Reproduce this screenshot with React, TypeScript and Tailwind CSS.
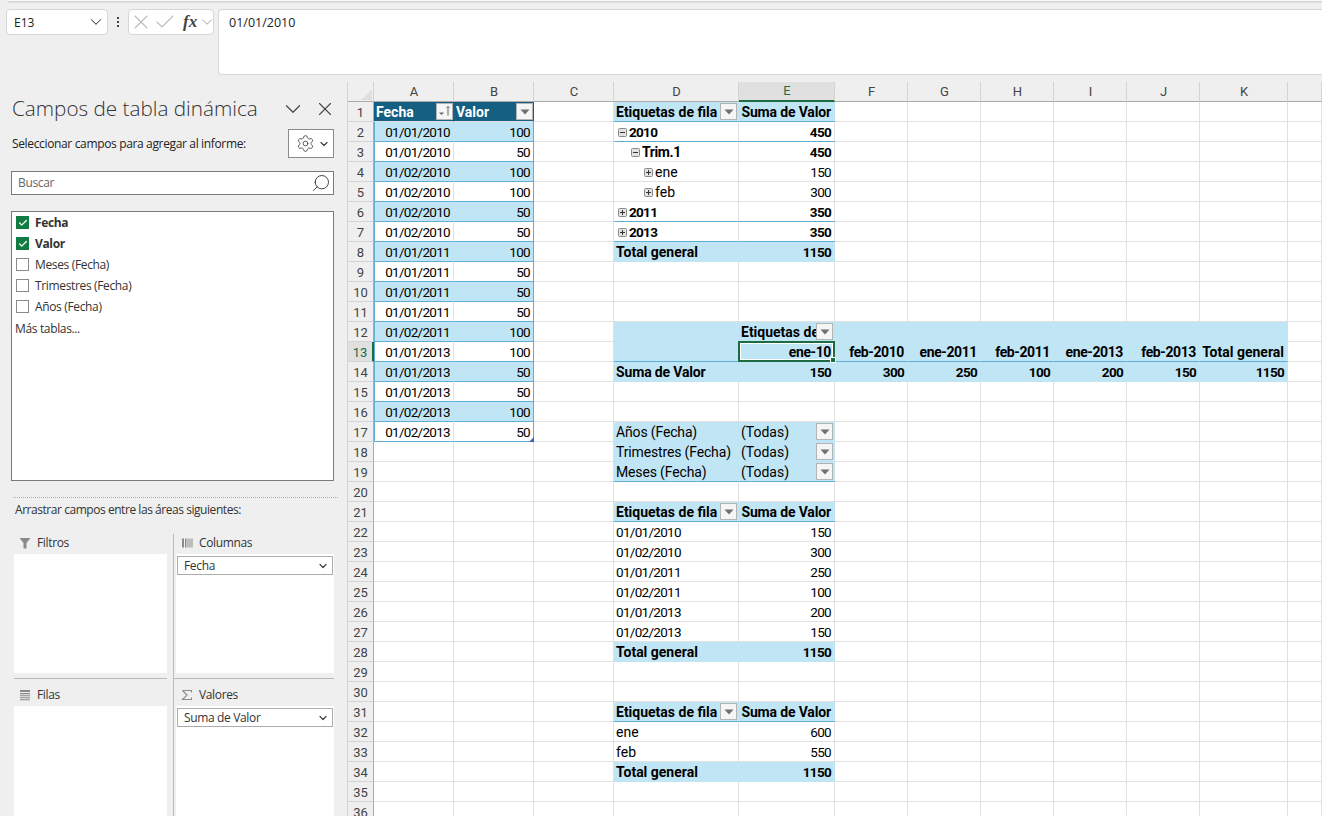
import React from 'react';
import { ChevronDown, X, Check, Search, Settings } from 'lucide-react';

const colHeads = ['A', 'B', 'C', 'D', 'E', 'F', 'G', 'H', 'I', 'J', 'K', ''];

type Cell = {
  t?: string;
  right?: boolean;
  bold?: boolean;
  indent?: string;
  tone?: 'band' | 'head' | 'white';
  line?: boolean;
  frame?: 'left' | 'right';
  expand?: 'plus' | 'minus';
  filter?: boolean;
  tight?: boolean;
  handle?: boolean;
};

// sheet content by "column + row"
const cells: Record<string, Cell> = {};

const tableRows: [string, string][] = [
  ['01/01/2010', '100'], ['01/01/2010', '50'], ['01/02/2010', '100'], ['01/02/2010', '100'],
  ['01/02/2010', '50'], ['01/02/2010', '50'], ['01/01/2011', '100'], ['01/01/2011', '50'],
  ['01/01/2011', '50'], ['01/01/2011', '50'], ['01/02/2011', '100'], ['01/01/2013', '100'],
  ['01/01/2013', '50'], ['01/01/2013', '50'], ['01/02/2013', '100'], ['01/02/2013', '50'],
];

cells['A1'] = { t: 'Fecha', bold: true, tone: 'head', filter: true };
cells['B1'] = { t: 'Valor', bold: true, tone: 'head', filter: true };
tableRows.forEach(([date, val], i) => {
  const band = i % 2 === 0;
  cells['A' + (i + 2)] = { t: date, right: true, tone: band ? 'band' : 'white', line: true, frame: 'left' };
  cells['B' + (i + 2)] = { t: val, right: true, tone: band ? 'band' : 'white', line: true, frame: 'right', handle: i === 15 };
});

function pivotHead(row: number) {
  cells['D' + row] = { t: 'Etiquetas de fila', bold: true, tone: 'band', line: true, filter: true };
  cells['E' + row] = { t: 'Suma de Valor', bold: true, tone: 'band', line: true, right: true, tight: true };
}
function pivotTotal(row: number, total: string) {
  cells['D' + row] = { t: 'Total general', bold: true, tone: 'band' };
  cells['E' + row] = { t: total, bold: true, tone: 'band', right: true };
}

pivotHead(1);
cells['D2'] = { t: '2010', bold: true, expand: 'minus', line: true, indent: 'pl-[4px]' };
cells['E2'] = { t: '450', bold: true, right: true, line: true };
cells['D3'] = { t: 'Trim.1', bold: true, expand: 'minus', indent: 'pl-[17px]' };
cells['E3'] = { t: '450', bold: true, right: true };
cells['D4'] = { t: 'ene', expand: 'plus', indent: 'pl-[30px]' };
cells['E4'] = { t: '150', right: true };
cells['D5'] = { t: 'feb', expand: 'plus', indent: 'pl-[30px]' };
cells['E5'] = { t: '300', right: true };
cells['D6'] = { t: '2011', bold: true, expand: 'plus', line: true, indent: 'pl-[4px]' };
cells['E6'] = { t: '350', bold: true, right: true, line: true };
cells['D7'] = { t: '2013', bold: true, expand: 'plus', line: true, indent: 'pl-[4px]' };
cells['E7'] = { t: '350', bold: true, right: true, line: true };
pivotTotal(8, '1150');

// horizontal pivot, rows 12 to 14
cells['D12'] = { tone: 'band' };
cells['E12'] = { t: 'Etiquetas de', bold: true, tone: 'band', filter: true };
['F', 'G', 'H', 'I', 'J', 'K'].forEach((c) => {
  cells[c + '12'] = { tone: 'band' };
});
cells['D13'] = { tone: 'band', line: true };
cells['E13'] = { t: 'ene-10', bold: true, right: true, tone: 'band', line: true };
([
  ['F', 'feb-2010', '300'], ['G', 'ene-2011', '250'], ['H', 'feb-2011', '100'],
  ['I', 'ene-2013', '200'], ['J', 'feb-2013', '150'], ['K', 'Total general', '1150'],
] as const).forEach(([c, head, val]) => {
  cells[c + '13'] = { t: head, bold: true, right: true, tone: 'band', line: true };
  cells[c + '14'] = { t: val, bold: true, right: true, tone: 'band' };
});
cells['D14'] = { t: 'Suma de Valor', bold: true, tone: 'band', tight: true };
cells['E14'] = { t: '150', bold: true, right: true, tone: 'band' };

// page filters
(['Años (Fecha)', 'Trimestres (Fecha)', 'Meses (Fecha)'] as const).forEach((name, i) => {
  const last = i === 2;
  cells['D' + (17 + i)] = { t: name, tone: 'band', line: last, tight: true };
  cells['E' + (17 + i)] = { t: '(Todas)', tone: 'band', line: last, filter: true };
});

pivotHead(21);
([
  ['01/01/2010', '150'], ['01/02/2010', '300'], ['01/01/2011', '250'],
  ['01/02/2011', '100'], ['01/01/2013', '200'], ['01/02/2013', '150'],
] as const).forEach(([d, v], i) => {
  cells['D' + (22 + i)] = { t: d };
  cells['E' + (22 + i)] = { t: v, right: true };
});
pivotTotal(28, '1150');

pivotHead(31);
cells['D32'] = { t: 'ene' };
cells['E32'] = { t: '600', right: true };
cells['D33'] = { t: 'feb' };
cells['E33'] = { t: '550', right: true };
pivotTotal(34, '1150');

// Aptos Narrow has tighter digits than Roboto, so numbers get squeezed
function textClass(c: Cell) {
  const t = c.t ?? '';
  if (/^[\d/]+$/.test(t)) return 'text-[13.5px] tracking-[-0.7px]';
  if (/\d/.test(t)) return 'text-[14px] tracking-[-0.4px]';
  if (c.tight) return 'text-[14px] tracking-[-0.15px]';
  return 'text-[14px]';
}

function FilterButton({ sorted, className }: { sorted?: boolean; className: string }) {
  return (
    <span className={`absolute z-10 flex h-[17px] w-[17px] items-center justify-center border border-[#b4b4b4] bg-[#f5f5f5] ${className}`}>
      {sorted ? (
        <svg width="15" height="15" viewBox="0 0 15 15">
          <path d="M2 8.5h5l-2.5 2.5z" fill="#666" />
          <path d="M11 2.5v9M9.5 4l1.5-1.5L12.5 4" stroke="#666" fill="none" strokeWidth="1" />
        </svg>
      ) : (
        <svg width="10" height="6" viewBox="0 0 10 6">
          <path d="M0.5 0.5h9L5 5.5z" fill="#707070" />
        </svg>
      )}
    </span>
  );
}

function ExpandBox({ minus }: { minus: boolean }) {
  return (
    <svg width="9" height="9" viewBox="0 0 9 9" className="mr-[1px] shrink-0">
      <rect x="0.5" y="0.5" width="8" height="8" rx="1" fill="#e2e2e2" stroke="#8a8a8a" />
      <path d={minus ? 'M2 4.5h5' : 'M2 4.5h5M4.5 2v5'} stroke="#333" strokeWidth="1" />
    </svg>
  );
}

function SheetCell({ col, row }: { col: string; row: number }) {
  const c = cells[col + row] ?? {};
  const tone =
    c.tone === 'head'
      ? 'bg-[#156082] text-white'
      : c.tone === 'band'
        ? 'bg-[#c0e6f5] text-black'
        : 'bg-white text-black';
  const bottom = c.line ? 'border-b-[#61aed5]' : c.tone === 'band' ? 'border-b-[#c0e6f5]' : 'border-b-[#e1e1e1]';
  const right =
    c.frame === 'right'
      ? 'border-r-[#61aed5]'
      : c.tone && c.tone !== 'white'
        ? 'border-r-transparent'
        : 'border-r-[#e1e1e1]';
  const isSelected = col === 'E' && row === 13;
  return (
    <div
      className={`relative flex items-center overflow-visible whitespace-nowrap border-b border-r pl-[2px] pr-[3px] pt-[2px] ${tone} ${bottom} ${right} ${c.right ? 'justify-end' : ''} ${c.bold ? 'font-bold' : ''} ${c.indent ?? ''} ${c.frame === 'left' ? 'border-l border-l-[#61aed5]' : ''}`}
    >
      {c.expand && <ExpandBox minus={c.expand === 'minus'} />}
      {c.t && <span className={`${textClass(c)} ${c.expand ? 'ml-[1px]' : ''}`}>{c.t}</span>}
      {c.filter && <FilterButton sorted={col === 'A'} className={c.tone === 'head' ? 'right-0 top-[1px]' : 'right-[1px] top-[1px]'} />}
      {c.handle && (
        <svg width="5" height="5" viewBox="0 0 5 5" className="absolute -bottom-[1px] -right-[1px] z-10">
          <path d="M5 0v5H0z" fill="#3f5fbf" />
        </svg>
      )}
      {isSelected && (
        <span className="absolute -left-[1px] -top-[1px] bottom-[-1px] right-[-1px] z-20 border-2 border-[#1d6b41] shadow-[inset_0_0_0_1px_white]">
          <span className="absolute -bottom-[3px] -right-[3px] h-[6px] w-[6px] border border-white bg-[#1d6b41]" />
        </span>
      )}
    </div>
  );
}

function Sheet() {
  const rows = Array.from({ length: 36 }, (_, i) => i + 1);
  return (
    <div className="grid flex-1 grid-cols-[26px_80px_80px_80px_125px_96px_73px_73px_73px_73px_73px_88px_1fr] grid-rows-[20px] auto-rows-[20px] content-start border-l border-[#d4d4d4] bg-white font-['Roboto',sans-serif]">
      <div className="relative border-b border-r border-b-[#ababab] border-r-[#d4d4d4] bg-[#efefef]">
        <svg width="11" height="11" viewBox="0 0 11 11" className="absolute bottom-[1px] right-[1px]">
          <path d="M11 0v11H0z" fill="#dfdfdf" />
        </svg>
      </div>
      {colHeads.map((h, i) => (
        <div
          key={i}
          className={`flex items-center justify-center border-r border-r-[#d4d4d4] pl-[1px] text-[13px] ${h === 'E' ? 'border-b-2 border-b-[#1d6b41] bg-[#e0e0e0] text-[#1d6b41]' : 'border-b border-b-[#ababab] bg-[#efefef] text-[#444]'}`}
        >
          {h}
        </div>
      ))}
      {rows.map((r) => (
        <React.Fragment key={r}>
          <div
            className={`flex items-center justify-center border-b border-b-[#d4d4d4] pt-[2px] text-[13px] ${r === 13 ? 'border-r-2 border-r-[#1d6b41] bg-[#e0e0e0] text-[#1d6b41]' : 'border-r border-r-[#ababab] bg-[#efefef] text-[#444]'}`}
          >
            {r}
          </div>
          {colHeads.map((h, i) => (
            <SheetCell key={i} col={h || 'L'} row={r} />
          ))}
        </React.Fragment>
      ))}
    </div>
  );
}

function AreaLabel({ icon, label, className }: { icon: React.ReactNode; label: string; className?: string }) {
  return (
    <div className={`flex h-[20px] items-center ${className ?? ''}`}>
      <span className="flex w-[20px] justify-center pl-[2px]">{icon}</span>
      <span className="pl-[3px] text-[12px] text-[#333]">{label}</span>
    </div>
  );
}

function AreaChip({ label }: { label: string }) {
  return (
    <div className="mx-[1px] mt-[2px] flex h-[19px] items-center justify-between border border-[#ababab] bg-white pl-[6px] pr-[3px] text-[12px] text-[#333]">
      {label}
      <ChevronDown size={12} strokeWidth={2.5} className="text-[#444]" />
    </div>
  );
}

function FieldRow({ label, checked }: { label: string; checked?: boolean }) {
  return (
    <div className="flex h-[21px] items-center pl-[4px]">
      {checked ? (
        <span className="flex h-[13px] w-[13px] items-center justify-center bg-[#107c41]">
          <Check size={10} strokeWidth={3} className="text-white" />
        </span>
      ) : (
        <span className="h-[13px] w-[13px] border border-[#8a8a8a] bg-white" />
      )}
      <span className={`ml-[6px] text-[12px] text-[#333] ${checked ? 'font-bold' : ''}`}>{label}</span>
    </div>
  );
}

function FieldPanel() {
  return (
    <div className="flex w-[347px] shrink-0 flex-col overflow-hidden pl-[11px] font-['Open_Sans',sans-serif] tracking-[-0.35px]">
      <div className="flex h-[47px] items-center justify-between pr-[11px] pt-[6px]">
        <span className="pl-[1px] text-[20.7px] font-light tracking-normal text-[#333]">Campos de tabla dinámica</span>
        <span className="flex items-center gap-[8px] text-[#444]">
          <ChevronDown size={26} strokeWidth={1.1} />
          <X size={22} strokeWidth={1.2} />
        </span>
      </div>
      <div className="flex h-[29px] items-center justify-between pr-[13px]">
        <span className="pl-[1px] text-[12px] text-[#222]">Seleccionar campos para agregar al informe:</span>
        <span className="flex h-[29px] w-[46px] items-center justify-center gap-[3px] border border-[#8a8a8a] bg-white pl-[3px] text-[#444]">
          <Settings size={19} strokeWidth={1.1} />
          <ChevronDown size={12} strokeWidth={2.5} />
        </span>
      </div>
      <div className="mr-[13px] mt-[13px] flex h-[24px] items-center justify-between border border-[#7a7a7a] bg-white pl-[6px] pr-[2px]">
        <span className="text-[12px] text-[#666]">Buscar</span>
        <Search size={20} strokeWidth={1.1} className="-scale-x-100 text-[#333]" />
      </div>
      <div className="mr-[13px] mt-[16px] h-[270px] shrink-0 border border-[#7a7a7a] bg-white">
        <FieldRow label="Fecha" checked />
        <FieldRow label="Valor" checked />
        <FieldRow label="Meses (Fecha)" />
        <FieldRow label="Trimestres (Fecha)" />
        <FieldRow label="Años (Fecha)" />
        <div className="flex h-[23px] items-center pl-[3px] text-[12px] text-[#333]">Más tablas...</div>
      </div>
      <div className="ml-[2px] mr-[9px] mt-[16px] border-t border-dotted border-[#b0b0b0]" />
      <div className="flex h-[24px] items-center pl-[4px] text-[12px] tracking-[-0.45px] text-[#333]">Arrastrar campos entre las áreas siguientes:</div>
      <div className="ml-[3px] mr-[13px] mt-[12px] grid min-h-0 flex-1 grid-cols-[153px_1fr] grid-rows-[145px_1fr]">
        <div className="flex flex-col border-b border-[#b9b9b9]">
          <AreaLabel
            label="Filtros"
            className="pb-[2px]"
            icon={
              <svg width="12" height="12" viewBox="0 0 12 12">
                <path d="M0.5 1h11L7.5 6v5.5h-3V6z" fill="#8a8a8a" />
              </svg>
            }
          />
          <div className="mb-[5px] flex-1 bg-white" />
        </div>
        <div className="ml-[6px] flex flex-col border-b border-l border-[#b9b9b9] pl-[2px]">
          <AreaLabel
            label="Columnas"
            className="pb-[2px]"
            icon={
              <svg width="12" height="12" viewBox="0 0 12 12">
                <path d="M1 1.5h2v9H1zM4 1.5h1.5v9H4zM6.5 1.5h1v9h-1zM8.5 1.5h1v9h-1zM10.5 1.5h1v9h-1z" fill="#8a8a8a" />
              </svg>
            }
          />
          <div className="mb-[5px] flex-1 bg-white">
            <AreaChip label="Fecha" />
          </div>
        </div>
        <div className="flex flex-col pt-[6px]">
          <AreaLabel
            label="Filas"
            className="mb-[1px]"
            icon={
              <svg width="12" height="12" viewBox="0 0 12 12">
                <path d="M1 1h10v2H1zM1 4h10v1.2H1zM1 6.2h10v1H1zM1 8.3h10v1H1zM1 10.2h10v1H1z" fill="#8a8a8a" />
              </svg>
            }
          />
          <div className="flex-1 bg-white" />
        </div>
        <div className="ml-[6px] flex flex-col border-l border-[#b9b9b9] pl-[2px] pt-[6px]">
          <AreaLabel
            label="Valores"
            className="mb-[1px]"
            icon={
              <svg width="12" height="12" viewBox="0 0 12 12">
                <path d="M1.5 1.5h9v2M10.5 10.5h-9L6 6 1.5 1.5M1.5 10.5h9v-2" stroke="#8a8a8a" strokeWidth="1.1" fill="none" />
              </svg>
            }
          />
          <div className="flex-1 bg-white">
            <AreaChip label="Suma de Valor" />
          </div>
        </div>
      </div>
    </div>
  );
}

function FormulaBar() {
  return (
    <div className="flex h-[77px] shrink-0 items-start gap-[2px] pl-[6px] pt-[8px] font-['Open_Sans',sans-serif] text-[12px] text-[#222]">
      <div className="flex h-[26px] w-[102px] items-center justify-between rounded-[4px] border border-[#d6d6d6] bg-white pl-[7px] pr-[2px]">
        <span className="pt-[1px]">E13</span>
        <ChevronDown size={18} strokeWidth={1.4} className="text-[#444]" />
      </div>
      <div className="flex w-[16px] flex-col items-center gap-[2px] pt-[8px]">
        <span className="h-[2px] w-[2px] bg-[#444]" />
        <span className="h-[2px] w-[2px] bg-[#444]" />
        <span className="h-[2px] w-[2px] bg-[#444]" />
      </div>
      <div className="flex h-[26px] w-[86px] items-center rounded-[4px] border border-[#d6d6d6] bg-white text-[#bbb]">
        <X size={24} strokeWidth={1.1} className="shrink-0" />
        <Check size={24} strokeWidth={1.1} className="shrink-0" />
        <span className="ml-[6px] w-[15px] shrink-0 font-['Liberation_Serif',serif] text-[17px] font-bold italic text-[#444]">fx</span>
        <ChevronDown size={18} strokeWidth={1.2} className="shrink-0 text-[#999]" />
      </div>
      <div className="ml-[2px] h-[66px] flex-1 rounded-l-[4px] border border-r-0 border-[#d6d6d6] bg-white pl-[10px] pt-[4px] text-[12.5px]">01/01/2010</div>
    </div>
  );
}

export default function App() {
  return (
    <div className="flex h-[816px] w-[1322px] flex-col overflow-hidden bg-[#efefef]">
      <div className="ml-[8px] h-[1px] shrink-0 bg-[#fafafa] shadow-[0_1px_2px_rgba(0,0,0,0.25)]" />
      <FormulaBar />
      <div className="flex min-h-0 flex-1 pt-[4px]">
        <FieldPanel />
        <Sheet />
      </div>
    </div>
  );
}
